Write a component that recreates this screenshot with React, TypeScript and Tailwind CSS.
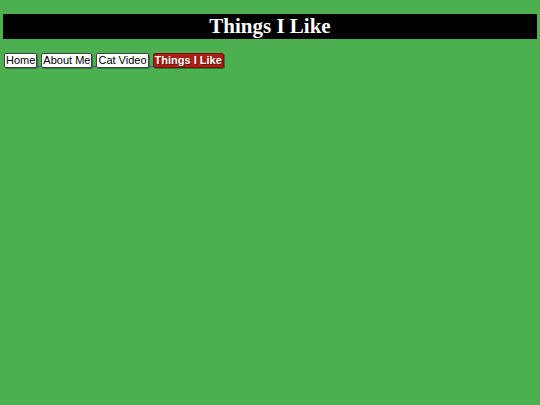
export default function App() {
  const links = ["Home", "About Me", "Cat Video"];
  return (
    <div className="min-h-screen bg-[#4caf50] px-[3px] pt-[14px]">
      <h1 className="bg-black text-white text-center font-bold text-[21px] leading-[25px] h-[25px] [font-family:'Liberation_Serif',serif]">
        Things I Like
      </h1>
      <nav className="mt-[14px] pl-[1px] flex items-center [font-family:'Liberation_Sans',Arial,sans-serif] text-[11px] leading-[13px]">
        {links.map((l) => (
          <a key={l} href="#" className="flex items-end">
            <span className="bg-white text-black border border-[#444] rounded-[2px] px-[1px] h-[15px] shadow-[1px_1px_0_rgba(0,0,0,0.35)]">
              {l}
            </span>
            <span className="w-[4px] h-[1px] bg-[#3550c8] mb-[1px]" />
          </a>
        ))}
        <a href="#" className="bg-[#ad1d12] text-white font-bold border border-[#6e120a] rounded-[2px] px-[1px] h-[15px] shadow-[1px_1px_0_rgba(0,0,0,0.35)] [text-shadow:1px_1px_0_rgba(0,0,0,0.4)]">
          Things I Like
        </a>
      </nav>
    </div>
  );
}
